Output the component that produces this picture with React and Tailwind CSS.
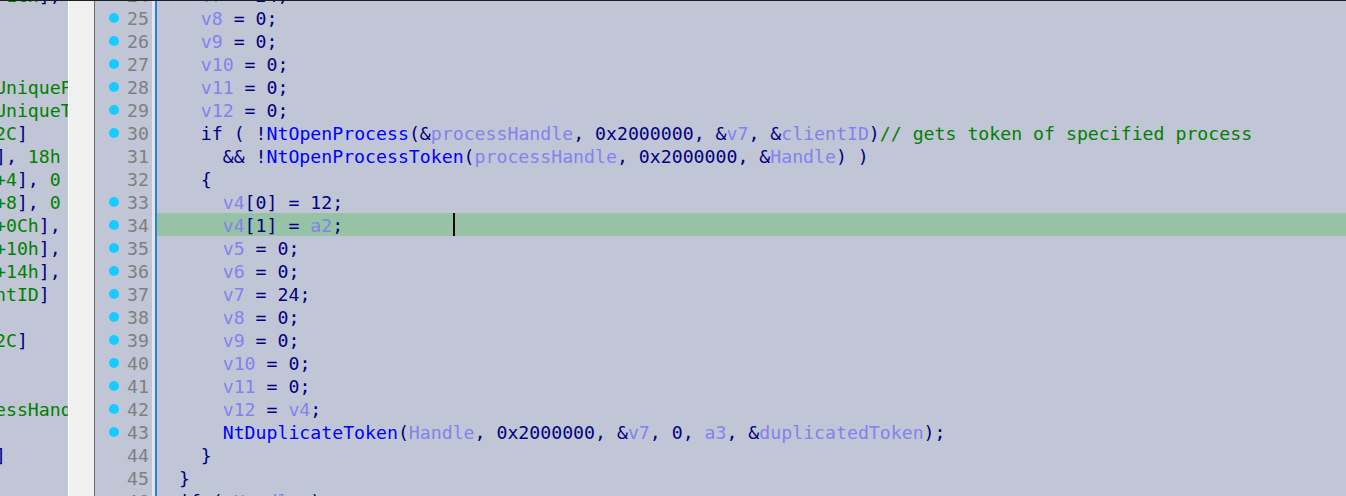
import React from 'react';

const FUNCS = ['NtOpenProcess', 'NtOpenProcessToken', 'NtDuplicateToken'];
const KEYWORDS = ['if'];

const COLORS = {
  navy: 'text-[#000080]',
  func: 'text-[#0000ff]',
  local: 'text-[#8282ee]',
  comment: 'text-[#008000]',
  green: 'text-[#008000]',
};

const firstLine = 24;

const codeLines = [
  '    v7 = 24;',
  '    v8 = 0;',
  '    v9 = 0;',
  '    v10 = 0;',
  '    v11 = 0;',
  '    v12 = 0;',
  '    if ( !NtOpenProcess(&processHandle, 0x2000000, &v7, &clientID)// gets token of specified process',
  '      && !NtOpenProcessToken(processHandle, 0x2000000, &Handle) )',
  '    {',
  '      v4[0] = 12;',
  '      v4[1] = a2;',
  '      v5 = 0;',
  '      v6 = 0;',
  '      v7 = 24;',
  '      v8 = 0;',
  '      v9 = 0;',
  '      v10 = 0;',
  '      v11 = 0;',
  '      v12 = v4;',
  '      NtDuplicateToken(Handle, 0x2000000, &v7, 0, a3, &duplicatedToken);',
  '    }',
  '  }',
  '  if ( Handle )',
];

// lines that carry a breakpoint-style dot in the gutter
const dotted = [24, 25, 26, 27, 28, 29, 30, 33, 34, 35, 36, 37, 38, 39, 40, 41, 42, 43, 46];

const listing = [
  '+1Ch],', '', '', '', 'UniqueProcess', 'UniqueThread', '2C]', '], 18h', '+4], 0', '+8], 0',
  '+0Ch],', '+10h],', '+14h],', 'ntID]', '', '2C]', '', '', 'essHandle', '', ']', '', 'ss',
];

const tokenize = (line) => {
  const out = [];
  const ci = line.indexOf('//');
  const code = ci >= 0 ? line.slice(0, ci) : line;
  const re = /([A-Za-z_][A-Za-z0-9_]*)|([0-9][0-9A-Za-z]*)|([^A-Za-z0-9_]+)/g;
  let m;
  while ((m = re.exec(code)) !== null) {
    if (m[1]) {
      let c = 'local';
      if (KEYWORDS.includes(m[1])) c = 'navy';
      else if (FUNCS.includes(m[1])) c = 'func';
      out.push([m[1], c]);
    } else if (m[2]) {
      out.push([m[2], 'navy']);
    } else {
      out.push([m[3], 'navy']);
    }
  }
  if (ci >= 0) out.push([line.slice(ci), 'comment']);
  return out;
};

const tokenizeListing = (text) => {
  const out = [];
  const re = /([\[\],]+)|([^\[\],]+)/g;
  let m;
  while ((m = re.exec(text)) !== null) {
    out.push([m[0], m[1] ? 'navy' : 'green']);
  }
  return out;
};

const App = () => {
  return (
    <div className="w-[1346px] h-[496px] overflow-hidden border-t border-[#1e1e1e] bg-[#c0c6d6] flex font-['DejaVu_Sans_Mono',monospace] text-[18.2px] whitespace-pre">
      {/* disassembly listing, cut off on the left */}
      <div className="w-[68px] shrink-0 overflow-hidden">
        <div className="mt-[-18px]">
          {listing.map((t, i) => (
            <div key={i} className="h-[23px] pt-[2px] leading-[21px] ml-[-5px]">
              {tokenizeListing(t).map(([s, c], j) => (
                <span key={j} className={COLORS[c]}>{s}</span>
              ))}
            </div>
          ))}
        </div>
      </div>
      <div className="w-px shrink-0 bg-white" />
      <div className="w-[25px] shrink-0 bg-[#f0f0f0]" />
      <div className="w-px shrink-0 bg-[#6b6b6b]" />

      {/* gutter */}
      <div className="w-[57px] shrink-0 overflow-hidden">
        <div className="mt-[-18px]">
          {codeLines.map((_, i) => {
            const n = firstLine + i;
            return (
              <div key={n} className="h-[23px] flex items-start">
                {dotted.includes(n) && (
                  <span className="mt-[7px] ml-[14px] w-[10px] h-[10px] rounded-full bg-[#16cbff]" />
                )}
                <span className="ml-auto pr-[3px] pt-[2px] leading-[21px] text-[#7f7f7f]">{n}</span>
              </div>
            );
          })}
        </div>
      </div>
      <div className="w-[3px] shrink-0 bg-[#e3e6ee]" />
      <div className="w-[2px] shrink-0 bg-[#2a7fde]" />

      {/* pseudocode */}
      <div className="flex-1 overflow-hidden">
        <div className="mt-[-18px]">
          {codeLines.map((line, i) => {
            const n = firstLine + i;
            const current = n === 34;
            return (
              <div
                key={n}
                className={current ? 'relative h-[23px] pt-[2px] leading-[21px] bg-[#98c2a6]' : 'relative h-[23px] pt-[2px] leading-[21px]'}
              >
                {tokenize(line).map(([s, c], j) => (
                  <span key={j} className={COLORS[c]}>{s}</span>
                ))}
                {current && <span className="absolute left-[296px] top-0 w-[2px] h-[23px] bg-black" />}
              </div>
            );
          })}
        </div>
      </div>
    </div>
  );
};

export default App;
